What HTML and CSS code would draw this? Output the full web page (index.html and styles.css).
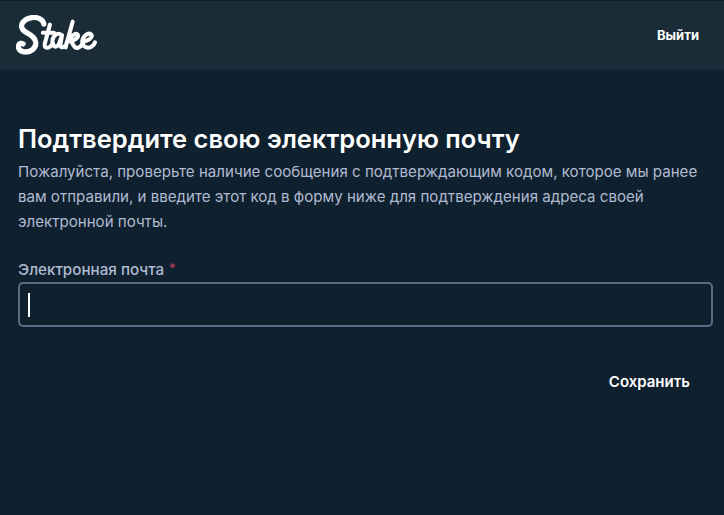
FILE: index.html
```html
<!DOCTYPE html>
<html lang="ru">
<head>
<meta charset="utf-8">
<title>Stake</title>
<link rel="stylesheet" href="styles.css">
</head>
<body>
<header class="topbar">
  <svg class="logo" viewBox="0 0 80 40" role="img" aria-label="Stake">
    <g fill="none" stroke="#fff" stroke-linecap="round" stroke-linejoin="round">
      <path class="s" d="M27.500 9C27 4 21 1.500 14.500 2.800C7.500 4.300 3.500 9.500 6.500 14C9.500 18.500 19 20 19.500 27C20 33 14.500 37 8.500 36.500C3.500 36 1.500 32.500 2.800 29.500C3.500 27.800 5.500 27.500 7 28.500"/>
      <path class="m" d="M33.500 9.500L28.500 28C27.500 33 31.500 33.500 34.500 30.500L36.500 28M26.500 17.500H37.500"/>
      <path class="m" d="M45.500 20.500C42.500 16.500 37 19 36 25C35.300 30.500 39 33 42 29.500L45.500 20L44 28C43.500 32.500 46 33 49 30"/>
      <path class="m" d="M56 6.500L49 32M50 27C53.500 21 59 17 61 19.500C62.500 22.500 56.500 25.500 53.500 26C56.500 26.500 56.500 33 60.500 32.500C63 32 65 30 66.500 27.500"/>
      <path class="m" d="M66 26C71 26 76 22.500 74.500 19.500C72.500 17 66.500 19.500 65.500 25.500C65 31.500 71 34 75 31C76.500 30 77.500 28.500 78 27"/>
    </g>
  </svg>
  <button class="logout" type="button">Выйти</button>
</header>
<main class="content">
  <h1 class="title">Подтвердите свою электронную почту</h1>
  <p class="lead">Пожалуйста, проверьте наличие сообщения с подтверждающим кодом, которое мы ранее вам отправили, и введите этот код в форму ниже для подтверждения адреса своей электронной почты.</p>
  <form class="form">
    <label class="field-label" for="email">Электронная почта <span class="req">*</span></label>
    <div class="input"><span class="caret"></span></div>
    <div class="actions"><button class="save" type="button">Сохранить</button></div>
  </form>
</main>
</body>
</html>
```
FILE: styles.css
```css
* { box-sizing: border-box; }
html, body { margin: 0; height: 100%; }
body {
  background: #0f212e;
  color: #fff;
  font-family: "Inter", "Liberation Sans", sans-serif;
  overflow: hidden;
}
.topbar {
  height: 70px;
  background: #1a2c38;
  border-top: 1px solid #0f212e;
  border-bottom: 1px solid #16283a;
  display: flex;
  align-items: center;
  justify-content: space-between;
  padding: 0 25px 0 16px;
}
.logo { width: 81px; height: 40.5px; display: block; }
.logo .s { stroke-width: 5.2; }
.logo .m { stroke-width: 4; }
.logout, .save {
  background: none;
  border: 0;
  padding: 0;
  color: #fff;
  font-family: inherit;
}
.logout { font-size: 13px; font-weight: 700; }
.content { padding: 55px 11px 0 18px; }
.title { margin: 0; font-size: 25.5px; line-height: 28px; font-weight: 600; }
.lead {
  margin: 6px 0 0;
  font-size: 15.1px;
  line-height: 25px;
  color: #b1bad3;
}
.form { margin-top: 26px; }
.field-label {
  display: block;
  font-size: 15.2px;
  line-height: 20px;
  font-weight: 500;
  color: #b1bad3;
}
.req { color: #b8405c; font-size: 13px; line-height: 0; margin-left: 1px; vertical-align: 2px; }
.input {
  margin-top: 2px;
  height: 45px;
  border: 2px solid #557086;
  border-radius: 5px;
  background: #0f212e;
  display: flex;
  align-items: center;
  padding-left: 8px;
}
.caret { width: 2px; height: 24px; background: #fff; }
.actions { display: flex; justify-content: flex-end; margin-top: 45px; padding-right: 23px; }
.save { font-size: 15px; font-weight: 600; line-height: 20px; }
```
